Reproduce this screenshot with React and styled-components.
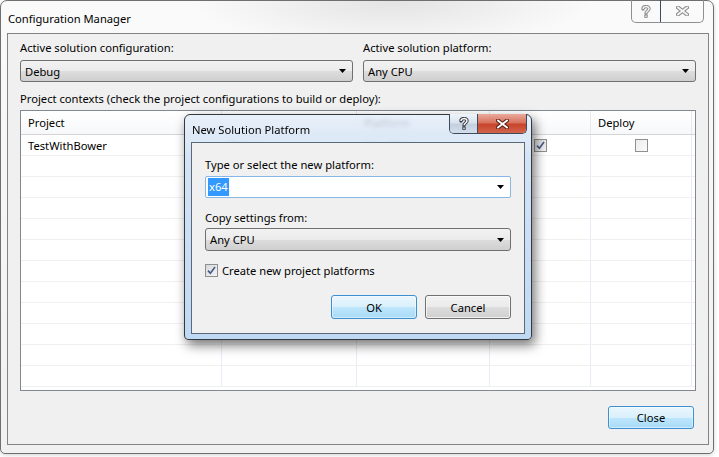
import React from "react";
import styled, { createGlobalStyle } from "styled-components";

const GlobalStyle = createGlobalStyle`
  html, body {
    margin: 0;
    background: #fff;
  }
  body {
    font-family: "Segoe UI", "Noto Sans", sans-serif;
    font-size: 11.2px;
    color: #000;
  }
`;

const Desktop = styled.div`
  position: relative;
  width: 719px;
  height: 457px;
  overflow: hidden;
  background: #fff;
`;

const Window = styled.div`
  width: 714px;
  height: 454px;
  box-sizing: border-box;
  border: 1px solid #6f6f6f;
  border-radius: 7px 7px 5px 5px;
  background: radial-gradient(ellipse 200px 45px at 55% 0%, rgba(110, 110, 110, 0.16), transparent),
    linear-gradient(180deg, #fafafa 0%, #f1f1f1 100%);
  box-shadow: 0 1px 4px rgba(0, 0, 0, 0.18);
  display: flex;
  flex-direction: column;
`;

const TitleBar = styled.div`
  height: 32px;
  display: flex;
  justify-content: space-between;
  align-items: flex-start;
  padding-left: 7px;
`;

const Title = styled.span`
  margin-top: 10px;
  line-height: 16px;
`;

const CaptionGroup = styled.div`
  display: flex;
  margin-right: ${(p) => p.$right}px;
  margin-top: -1px;
  border: 1px solid ${(p) => (p.$active ? "#3d4a5c" : "#8f8f8f")};
  border-top: none;
  border-radius: 0 0 5px 5px;
  overflow: hidden;
`;

const CaptionButton = styled.div`
  width: ${(p) => p.$w}px;
  height: ${(p) => p.$h}px;
  display: flex;
  align-items: center;
  justify-content: center;
  & + & {
    border-left: 1px solid ${(p) => (p.$active ? "#3d4a5c" : "#9a9a9a")};
  }
  background: ${(p) =>
    p.$kind === "close"
      ? "linear-gradient(180deg, #e9a99b 0%, #d9735f 45%, #c8442c 55%, #d2654c 100%)"
      : p.$active
      ? "linear-gradient(180deg, #eef3f9 0%, #d9e3ee 45%, #c3d0df 55%, #d3deea 100%)"
      : "transparent"};
`;

const Client = styled.div`
  flex: 1;
  margin: 0 4px 8px 6px;
  border: 1px solid #838383;
  background: #f0f0f0;
  padding: 6px 12px 0 12px;
  display: flex;
  flex-direction: column;
`;

const FieldRow = styled.div`
  display: grid;
  grid-template-columns: 1fr 1fr;
  column-gap: 10px;
`;

const Field = styled.div`
  display: flex;
  flex-direction: column;
  gap: 4px;
`;

const Label = styled.div`
  line-height: 16px;
  margin-top: ${(p) => p.$top || 0}px;
`;

const Combo = styled.div`
  height: ${(p) => p.$h || 22}px;
  box-sizing: border-box;
  border: 1px solid #707070;
  border-radius: 3px;
  background: linear-gradient(180deg, #f2f2f2 0%, #ebebeb 50%, #dddddd 51%, #cfcfcf 100%);
  display: flex;
  align-items: center;
  justify-content: space-between;
  padding: 0 6px 0 4px;
  margin-top: ${(p) => p.$top || 0}px;
`;

const TextInput = styled.div`
  height: 22px;
  box-sizing: border-box;
  border: 1px solid #86b7e6;
  border-radius: 2px;
  background: #fff;
  display: flex;
  align-items: center;
  justify-content: space-between;
  padding: 0 6px 0 2px;
  margin-top: 3px;
`;

const Selected = styled.span`
  background: #3399ff;
  color: #fff;
  line-height: 18px;
  padding: 0 1px;
`;

const Arrow = () => (
  <svg width="7" height="4" viewBox="0 0 7 4">
    <polygon points="0,0 7,0 3.5,4" fill="#000" />
  </svg>
);

const Table = styled.div`
  margin-top: 3px;
  height: 281px;
  box-sizing: border-box;
  border: 1px solid #828790;
  background: #fff;
  overflow: hidden;
`;

const cols = "201px 135px 133px 101px 101px 1fr";

const HeaderRow = styled.div`
  display: grid;
  grid-template-columns: ${cols};
  height: 24px;
  box-sizing: border-box;
  border-bottom: 1px solid #d5d5d5;
  background: linear-gradient(180deg, #ffffff 0%, #f7f8fa 100%);
`;

const HeaderCell = styled.div`
  display: flex;
  align-items: center;
  padding: 0 7px;
  border-right: 1px solid #e8e8e8;
`;

const Row = styled.div`
  display: grid;
  grid-template-columns: ${cols};
  height: 21px;
  box-sizing: border-box;
  border-bottom: 1px solid #f0f0f0;
`;

const Cell = styled.div`
  display: flex;
  align-items: center;
  justify-content: ${(p) => (p.$center ? "center" : "flex-start")};
  padding: 0 7px;
  border-right: 1px solid #e6edf6;
`;

const Box = styled.span`
  width: 13px;
  height: 13px;
  box-sizing: border-box;
  border: 1px solid #8e8f8f;
  background: ${(p) =>
    p.$checked
      ? "linear-gradient(135deg, #d6d8db 0%, #f4f4f4 100%)"
      : "linear-gradient(135deg, #ececec 0%, #fafafa 100%)"};
  display: inline-flex;
  align-items: center;
  justify-content: center;
`;

const CheckBox = ({ checked }) => (
  <Box $checked={checked}>
    {checked && (
      <svg width="9" height="9" viewBox="0 0 9 9">
        <path d="M1 4.6 L3.4 7.2 L8 1" fill="none" stroke="#46598b" strokeWidth="1.6" />
      </svg>
    )}
  </Box>
);

const Footer = styled.div`
  display: flex;
  justify-content: flex-end;
  gap: 8px;
  margin-top: ${(p) => p.$top}px;
  padding-right: ${(p) => p.$right || 0}px;
`;

const Button = styled.div`
  width: 86px;
  height: ${(p) => p.$h || 23}px;
  box-sizing: border-box;
  border: 1px solid ${(p) => (p.$default ? "#3c8fd0" : "#707070")};
  border-radius: 3px;
  background: ${(p) =>
    p.$default
      ? "linear-gradient(180deg, #eaf6fd 0%, #d9f0fc 50%, #bee6fd 51%, #a9daf6 100%)"
      : "linear-gradient(180deg, #f2f2f2 0%, #ebebeb 50%, #dddddd 51%, #cfcfcf 100%)"};
  box-shadow: inset 0 0 0 1px rgba(255, 255, 255, ${(p) => (p.$default ? 0.45 : 0.7)});
  display: flex;
  align-items: center;
  justify-content: center;
`;

const CheckRow = styled.div`
  display: flex;
  align-items: center;
  gap: 4px;
  height: 14px;
  margin-top: 12px;
`;

const Dialog = styled.div`
  position: absolute;
  left: 184px;
  top: 114px;
  width: 348px;
  height: 226px;
  box-sizing: border-box;
  border: 1px solid #33393f;
  border-radius: 6px 6px 4px 4px;
  background: linear-gradient(180deg, rgba(228, 237, 248, 0.82) 0%, rgba(206, 224, 244, 0.9) 20%, rgba(188, 215, 243, 0.95) 100%);
  backdrop-filter: blur(2px);
  box-shadow: 3px 5px 12px rgba(0, 0, 0, 0.55);
  display: flex;
  flex-direction: column;
`;

const DialogTitleBar = styled.div`
  height: 27px;
  display: flex;
  justify-content: space-between;
  align-items: flex-start;
  padding-left: 7px;
`;

const DialogTitle = styled.span`
  margin-top: 7px;
  line-height: 16px;
`;

const DialogClient = styled.div`
  flex: 1;
  margin: 0 6px 5px 6px;
  border: 1px solid #5b6878;
  background: #f0f0f0;
  padding: 14px 13px 0 13px;
  display: flex;
  flex-direction: column;
`;

const HelpGlyph = ({ fill, stroke }) => (
  <svg width="10" height="13" viewBox="0 0 10 13">
    <path d="M2 4 C2 0.8 8 0.8 8 3.8 C8 6 5 6 5 8.3" fill="none" stroke={stroke} strokeWidth="3.4" strokeLinecap="round" />
    <rect x="3.3" y="9.6" width="3.4" height="3.2" fill={stroke} />
    <path d="M2 4 C2 0.8 8 0.8 8 3.8 C8 6 5 6 5 8.3" fill="none" stroke={fill} strokeWidth="1.4" />
    <rect x="4.3" y="10.5" width="1.4" height="1.4" fill={fill} />
  </svg>
);

const CloseGlyph = ({ fill, stroke, size = 13 }) => (
  <svg width={size} height={size - 3} viewBox="0 0 13 10">
    <path d="M2 1.5 L11 8.5 M11 1.5 L2 8.5" stroke={stroke} strokeWidth="4" strokeLinecap="square" />
    <path d="M2 1.5 L11 8.5 M11 1.5 L2 8.5" stroke={fill} strokeWidth="1.8" strokeLinecap="square" />
  </svg>
);

const headers = ["Project", "", "Platform", "Build", "Deploy", ""];

export default function App() {
  const emptyRows = Array.from({ length: 11 });
  return (
    <Desktop>
      <GlobalStyle />
      <Window>
        <TitleBar>
          <Title>Configuration Manager</Title>
          <CaptionGroup $right={9}>
            <CaptionButton $w={28} $h={22}>
              <HelpGlyph fill="#f4f4f4" stroke="#8c8c8c" />
            </CaptionButton>
            <CaptionButton $w={42} $h={22}>
              <CloseGlyph fill="#f4f4f4" stroke="#8c8c8c" />
            </CaptionButton>
          </CaptionGroup>
        </TitleBar>
        <Client>
          <FieldRow>
            <Field>
              <Label>Active solution configuration:</Label>
              <Combo>
                <span>Debug</span>
                <Arrow />
              </Combo>
            </Field>
            <Field>
              <Label>Active solution platform:</Label>
              <Combo>
                <span>Any CPU</span>
                <Arrow />
              </Combo>
            </Field>
          </FieldRow>
          <Label $top={9}>Project contexts (check the project configurations to build or deploy):</Label>
          <Table>
            <HeaderRow>
              {headers.map((h, i) => (
                <HeaderCell key={i}>{h}</HeaderCell>
              ))}
            </HeaderRow>
            <Row>
              <Cell>TestWithBower</Cell>
              <Cell>Debug</Cell>
              <Cell>Any CPU</Cell>
              <Cell $center>
                <CheckBox checked />
              </Cell>
              <Cell $center>
                <CheckBox />
              </Cell>
              <Cell />
            </Row>
            {emptyRows.map((_, r) => (
              <Row key={r}>
                {headers.map((h, i) => (
                  <Cell key={i} />
                ))}
              </Row>
            ))}
          </Table>
          <Footer $top={15} $right={2}>
            <Button $default>Close</Button>
          </Footer>
        </Client>
      </Window>

      <Dialog>
        <DialogTitleBar>
          <DialogTitle>New Solution Platform</DialogTitle>
          <CaptionGroup $right={4} $active>
            <CaptionButton $w={27} $h={19} $active>
              <HelpGlyph fill="#ffffff" stroke="#3a3f47" />
            </CaptionButton>
            <CaptionButton $w={48} $h={19} $active $kind="close">
              <CloseGlyph fill="#ffffff" stroke="#5b2219" />
            </CaptionButton>
          </CaptionGroup>
        </DialogTitleBar>
        <DialogClient>
          <Label>Type or select the new platform:</Label>
          <TextInput>
            <Selected>x64</Selected>
            <Arrow />
          </TextInput>
          <Label $top={12}>Copy settings from:</Label>
          <Combo $h={23} $top={2}>
            <span>Any CPU</span>
            <Arrow />
          </Combo>
          <CheckRow>
            <CheckBox checked />
            <span>Create new project platforms</span>
          </CheckRow>
          <Footer $top={18}>
            <Button $default $h={24}>OK</Button>
            <Button $h={24}>Cancel</Button>
          </Footer>
        </DialogClient>
      </Dialog>
    </Desktop>
  );
}
